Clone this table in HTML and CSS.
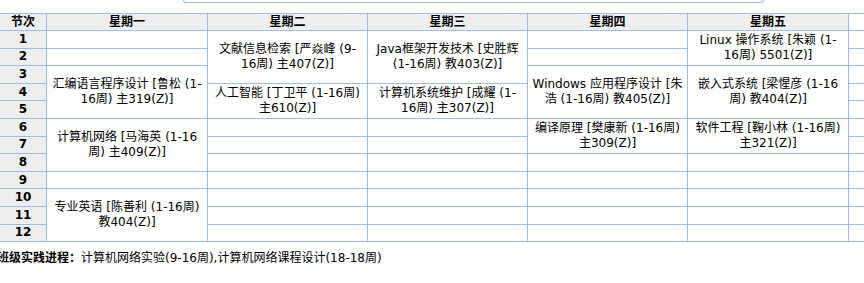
FILE: index.html
```html
<!DOCTYPE html>
<html lang="zh-CN">
<head>
<meta charset="utf-8">
<title>课表</title>
<link rel="stylesheet" href="styles.css">
</head>
<body>
<div class="panel"></div>
<div class="grid-wrap">
<table class="timetable">
<colgroup>
<col class="c-num"><col class="c-wide"><col class="c-day"><col class="c-day"><col class="c-day"><col class="c-wide"><col class="c-day">
</colgroup>
<thead>
<tr><th class="num">节次</th><th>星期一</th><th>星期二</th><th>星期三</th><th>星期四</th><th>星期五</th><th class="extra"></th></tr>
</thead>
<tbody>
<tr><th class="num">1</th><td></td><td rowspan="3" class="course">文献信息检索 [严焱峰 (9-<br>16周) 主407(Z)]</td><td rowspan="3" class="course">Java框架开发技术 [史胜辉<br>(1-16周) 教403(Z)]</td><td></td><td rowspan="2" class="course">Linux 操作系统 [朱颖 (1-<br>16周) 5501(Z)]</td><td></td></tr>
<tr><th class="num">2</th><td></td><td></td><td></td></tr>
<tr><th class="num">3</th><td rowspan="3" class="course">汇编语言程序设计 [鲁松 (1-<br>16周) 主319(Z)]</td><td rowspan="3" class="course">Windows 应用程序设计 [朱<br>浩 (1-16周) 教405(Z)]</td><td rowspan="3" class="course">嵌入式系统 [梁惺彦 (1-16<br>周) 教404(Z)]</td><td></td></tr>
<tr><th class="num">4</th><td rowspan="2" class="course">人工智能 [丁卫平 (1-16周)<br>主610(Z)]</td><td rowspan="2" class="course">计算机系统维护 [成耀 (1-<br>16周) 主307(Z)]</td><td></td></tr>
<tr><th class="num">5</th><td></td></tr>
<tr><th class="num">6</th><td rowspan="3" class="course">计算机网络 [马海英 (1-16<br>周) 主409(Z)]</td><td></td><td></td><td rowspan="2" class="course">编译原理 [樊康新 (1-16周)<br>主309(Z)]</td><td rowspan="2" class="course">软件工程 [鞠小林 (1-16周)<br>主321(Z)]</td><td></td></tr>
<tr><th class="num">7</th><td></td><td></td><td></td></tr>
<tr><th class="num">8</th><td></td><td></td><td></td><td></td><td></td></tr>
<tr><th class="num">9</th><td></td><td></td><td></td><td></td><td></td><td></td></tr>
<tr><th class="num">10</th><td rowspan="3" class="course">专业英语 [陈善利 (1-16周)<br>教404(Z)]</td><td></td><td></td><td></td><td></td><td></td></tr>
<tr><th class="num">11</th><td></td><td></td><td></td><td></td><td></td></tr>
<tr><th class="num">12</th><td></td><td></td><td></td><td></td><td></td></tr>
</tbody>
</table>
</div>
<p class="practice"><b>班级实践进程：</b>计算机网络实验(9-16周),计算机网络课程设计(18-18周)</p>
</body>
</html>
```

FILE: styles.css
```css
html, body {
  margin: 0;
  padding: 0;
  overflow: hidden;
  background: #fff;
}
body {
  font-family: "DejaVu Sans", "Noto Sans CJK SC", sans-serif;
  font-size: 12px;
  color: #000;
}
.panel {
  margin-left: 183px;
  width: 579px;
  height: 2px;
  border: 1px solid #9dbcf5;
  border-top: none;
  border-radius: 0 0 4px 4px;
  margin-bottom: 10px;
}
.grid-wrap {
  overflow: hidden;
}
.timetable {
  border-collapse: collapse;
  table-layout: fixed;
  width: 1009px;
  margin-left: -1px;
}
.c-num { width: 47px; }
.c-wide { width: 161px; }
.c-day { width: 160px; }
.timetable th,
.timetable td {
  border: 1px solid #9dbcf5;
  padding: 0 2px;
  height: 16.6px;
  line-height: 15px;
  text-align: center;
  vertical-align: middle;
}
.timetable thead th {
  background: #eeeeee;
  font-weight: bold;
  height: 16px;
}
.timetable thead th.extra {
  background: #fff;
}
.timetable tbody th.num {
  background: #eeeeee;
  font-weight: bold;
}
.timetable td.course {
  white-space: nowrap;
}
.practice {
  margin: 8px 0 0 -3px;
  line-height: 16px;
}
```
